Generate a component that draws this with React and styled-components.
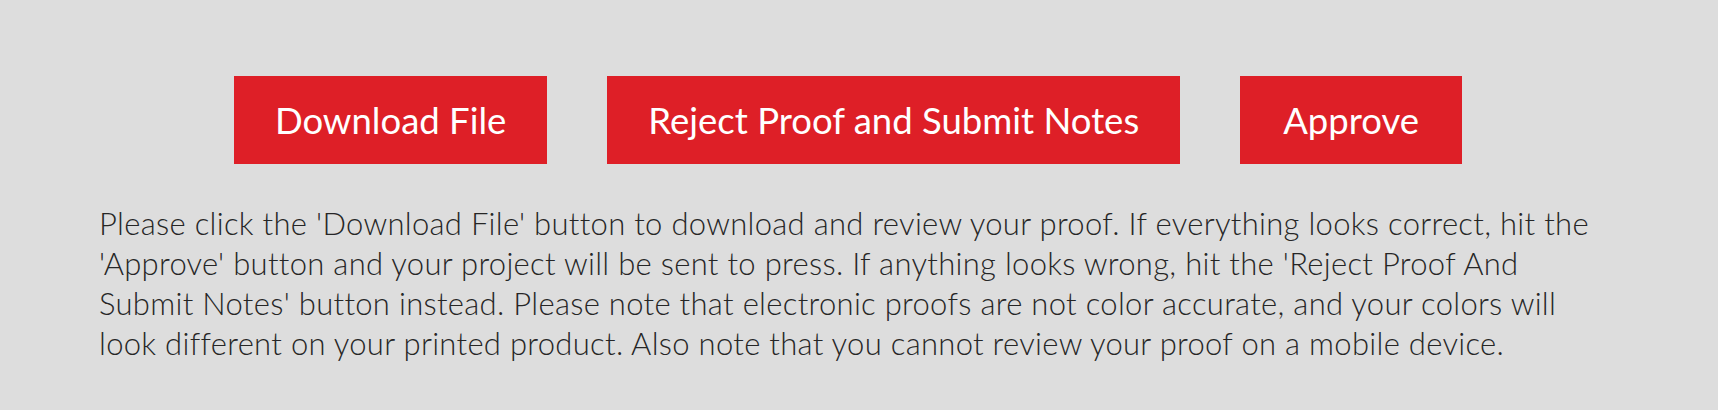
import React from "react";
import styled, { createGlobalStyle } from "styled-components";

const GlobalStyle = createGlobalStyle`
  html, body {
    margin: 0;
    padding: 0;
    background: #dddddd;
  }
  body {
    font-family: Lato, "Open Sans", sans-serif;
  }
`;

const ProofReview = () => {
  return (
    <Page>
      <GlobalStyle />
      <Actions>
        <ActionButton>Download File</ActionButton>
        <ActionButton>Reject Proof and Submit Notes</ActionButton>
        <ActionButton $wide>Approve</ActionButton>
      </Actions>
      <Notice>
        Please click the 'Download File' button to download and review your
        proof. If everything looks correct, hit the 'Approve' button and your
        project will be sent to press. If anything looks wrong, hit the 'Reject
        Proof And Submit Notes' button instead. Please note that electronic
        proofs are not color accurate, and your colors will look different on
        your printed product. Also note that you cannot review your proof on a
        mobile device.
      </Notice>
    </Page>
  );
};

export default ProofReview;

const Page = styled.div`
  height: 410px;
  box-sizing: border-box;
  padding: 76px 99px 0;
  background: #dddddd;
`;

const Actions = styled.div`
  display: flex;
  justify-content: center;
  gap: 60px;
  padding-right: 22px;
`;

const ActionButton = styled.button`
  height: 88px;
  padding: 0 ${(p) => (p.$wide ? "43px" : "41px")};
  border: none;
  border-radius: 0;
  background-color: #de1f27;
  color: #ffffff;
  font-family: Lato, "Open Sans", sans-serif;
  font-size: 36.5px;
  font-weight: 400;
  cursor: pointer;
`;

const Notice = styled.p`
  margin: 39px 0 0;
  max-width: 1502px;
  color: #262626;
  font-size: 31px;
  font-weight: 300;
  letter-spacing: 0.3px;
  line-height: 40px;
`;
